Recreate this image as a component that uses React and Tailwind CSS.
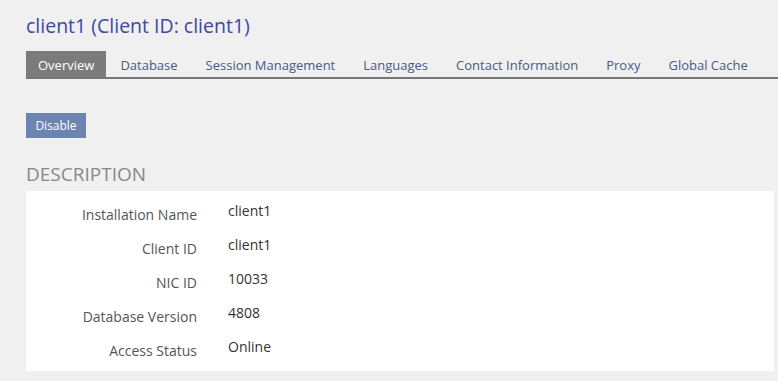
import React from 'react';

const tabs = ['Overview', 'Database', 'Session Management', 'Languages', 'Contact Information', 'Proxy', 'Global Cache'];

const rows = [
  ['Installation Name', 'client1'],
  ['Client ID', 'client1'],
  ['NIC ID', '10033'],
  ['Database Version', '4808'],
  ['Access Status', 'Online'],
];

export default function App() {
  return (
    <div className="min-h-screen bg-[#f0f0f0] pl-[26px] pr-[4px] pt-[12px] font-['Open_Sans',sans-serif]">
      <h1 className="text-[19.5px] leading-[28px] text-[#3d47a5]">client1 (Client ID: client1)</h1>

      {/* tab strip */}
      <div className="mt-[11px] mr-[-4px] flex border-b-2 border-[#777]">
        {tabs.map((tab, i) => (
          <div
            key={tab}
            className={
              i === 0
                ? 'h-[26px] px-[12px] pt-[3px] flex items-center text-[13px] bg-[#7b7b7b] text-white'
                : 'h-[26px] px-[14px] pt-[3px] flex items-center text-[13px] text-[#4a5985]'
            }
          >
            {tab}
          </div>
        ))}
      </div>

      <button className="mt-[34px] h-[25px] w-[60px] bg-[#6b84b0] text-white text-[12px]">Disable</button>

      <h2 className="mt-[23px] text-[19px] leading-[26px] text-[#888] uppercase">Description</h2>

      <div className="mt-[4px] h-[180px] bg-white pt-[5px]">
        {rows.map(([label, value]) => (
          <div key={label} className="flex h-[34px] items-center">
            <div className="w-[171px] text-right text-[14px] text-[#555] pt-[2px]">{label}</div>
            <div className="ml-[31px] text-[14px] text-[#333] pb-[6px]">{value}</div>
          </div>
        ))}
      </div>
    </div>
  );
}
